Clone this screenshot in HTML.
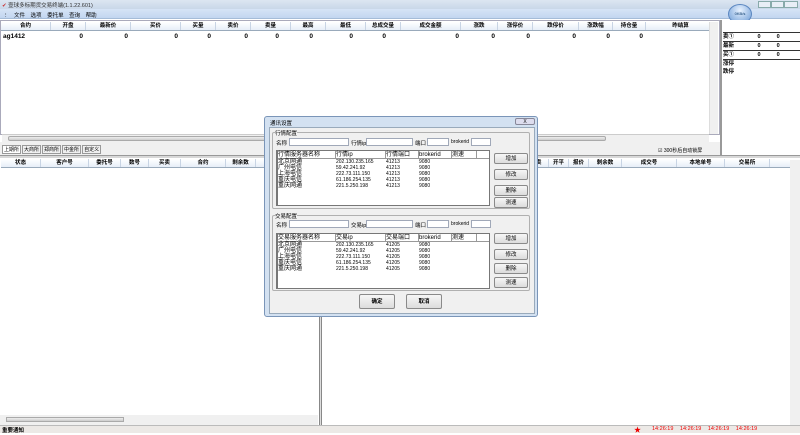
<!DOCTYPE html><html><head><meta charset="utf-8"><style>
*{margin:0;padding:0;box-sizing:border-box}
body{width:800px;height:433px;overflow:hidden;background:#fff;font-family:"Liberation Sans","Noto Sans CJK SC",sans-serif;font-size:6px;position:relative;color:#000}
.a{position:absolute}
.hd{position:absolute;height:9px;background:linear-gradient(#fff,#e6eef8);border-bottom:1px solid #9ab;display:flex;font-weight:bold;font-size:5.5px;line-height:8px}
.hd span{border-right:1px solid #c8d4e4;text-align:center;flex:none}
.row span{position:absolute;font-weight:bold;font-size:6.5px;text-align:right}
.dlg{position:absolute;left:264px;top:116px;width:274px;height:201px;background:#d3e1f1;border:1px solid #7a95b8;border-radius:3px}
.in{position:absolute;background:#f0f0f0}
.box{position:absolute;border:1px solid #b0b0b0;border-radius:2px}
.inp{position:absolute;background:#fff;border:1px solid #a0a8b8;height:8px}
.btn{position:absolute;width:34px;height:11px;border:1px solid #8a8a8a;border-radius:2px;background:linear-gradient(#f6f6f6,#dcdcdc);text-align:center;line-height:10px;font-size:5.5px}
.lst{position:absolute;background:#fff;border:1px solid #777;border-left:2px solid #777;font-size:6px;line-height:6px}
.lh{display:flex;border-bottom:1px solid #999;height:8px;line-height:8px;background:#fff}
.lh span{border-right:1px solid #999}
.lr{display:flex;height:6px;line-height:6px}
.lr span:nth-child(n+2){font-size:5px}
.t{position:absolute;font-size:5.5px}
.wb{position:absolute;top:1px;height:7px;border:1px solid #8aa;background:#e8eef6}
</style></head><body>
<div class="a" style="left:0;top:0;width:800px;height:9px;background:linear-gradient(#dce6f2,#c9d7e9)"></div>
<div class="a" style="left:2px;top:1px;font-size:5.5px;color:#333"><span style="color:#c33">✔</span> 壹球多标期货交易终端(1.1.22.601)</div>
<div class="wb" style="left:758px;width:13px"></div><div class="wb" style="left:771px;width:13px"></div><div class="wb" style="left:784px;width:14px"></div>
<div class="a" style="left:0;top:9px;width:800px;height:10px;background:linear-gradient(#d6e4f6,#c2d6f0);border-bottom:1px solid #a5bcd8"></div>
<div class="a" style="left:3px;top:11px;font-size:5.5px;word-spacing:4px">⋮ 文件 选项 委托单 查询 帮助</div>
<div class="a" style="left:728px;top:4px;width:24px;height:20px;border-radius:50%;background:radial-gradient(circle at 50% 30%,#e8f2ff,#6a9ad4);border:1px solid #5a86c0;font-size:4px;text-align:center;line-height:18px;color:#036">0KB/s</div>
<div class="a" style="left:0;top:20px;width:720px;height:115px;border:1px solid #aab"></div>
<div class="hd" style="left:1px;top:22px;width:716px">
<span style="width:50px">合约</span><span style="width:35px">开盘</span><span style="width:45px">最新价</span><span style="width:50px">买价</span><span style="width:35px">买量</span><span style="width:35px">卖价</span><span style="width:40px">卖量</span><span style="width:35px">最高</span><span style="width:40px">最低</span><span style="width:35px">总成交量</span><span style="width:60px">成交金额</span><span style="width:37px">涨跌</span><span style="width:35px">涨停价</span><span style="width:46px">跌停价</span><span style="width:34px">涨跌幅</span><span style="width:33px">持仓量</span><span style="width:70px">昨结算</span></div>
<div class="row">
<span style="left:3px;top:33px;text-align:left">ag1412</span>
<span style="left:70px;top:33px;width:13px">0</span><span style="left:115px;top:33px;width:13px">0</span><span style="left:165px;top:33px;width:13px">0</span><span style="left:198px;top:33px;width:13px">0</span><span style="left:235px;top:33px;width:13px">0</span><span style="left:266px;top:33px;width:13px">0</span><span style="left:300px;top:33px;width:13px">0</span><span style="left:340px;top:33px;width:13px">0</span><span style="left:373px;top:33px;width:13px">0</span><span style="left:446px;top:33px;width:13px">0</span><span style="left:482px;top:33px;width:13px">0</span><span style="left:517px;top:33px;width:13px">0</span><span style="left:563px;top:33px;width:13px">0</span><span style="left:597px;top:33px;width:13px">0</span><span style="left:630px;top:33px;width:13px">0</span></div>
<div class="a" style="left:709px;top:22px;width:9px;height:112px;background:#f0f0f0;border-left:1px solid #ddd"></div>
<div class="a" style="left:2px;top:134px;width:707px;height:8px;background:#f0f0f0;border-top:1px solid #ccc"></div>
<div class="a" style="left:8px;top:136px;width:598px;height:5px;background:linear-gradient(#eee,#ccc);border:1px solid #aaa;border-radius:2px"></div>
<div class="a" style="left:720px;top:20px;width:80px;height:135px;background:#fff;border-left:2px solid #999"></div>
<div class="a" style="left:723px;top:22px;width:77px;height:134px;font-size:5.5px;font-weight:bold;line-height:8px">
<div style="height:10px"></div>
<div style="border-top:1px solid #333">卖① <span style="margin-left:22px">0</span><span style="margin-left:16px">0</span></div>
<div style="border-top:1px solid #333">最新 <span style="margin-left:22px">0</span><span style="margin-left:16px">0</span></div>
<div style="border-top:1px solid #333">买① <span style="margin-left:22px">0</span><span style="margin-left:16px">0</span></div>
<div style="border-top:1px solid #333">涨停</div><div>跌停</div></div>
<div class="a" style="left:0;top:142px;width:720px;height:14px;background:#f0f0f0"></div>
<div class="a" style="left:2px;top:145px;font-size:5px;display:flex;gap:1px">
<span style="border:1px solid #999;padding:0 1px;background:#fff">上期所</span><span style="border:1px solid #999;padding:0 1px">大商所</span><span style="border:1px solid #999;padding:0 1px">郑商所</span><span style="border:1px solid #999;padding:0 1px">中金所</span><span style="border:1px solid #999;padding:0 1px">自定义</span></div>
<div class="t" style="left:658px;top:147px;font-size:5px">☑ 300秒后自动锁屏</div>
<div class="a" style="left:0;top:155px;width:800px;height:3px;background:#d8d8d8;border-top:1px solid #999"></div>
<div class="hd" style="left:1px;top:159px;width:318px"><span style="width:40px">状态</span><span style="width:48px">客户号</span><span style="width:32px">委托号</span><span style="width:28px">数号</span><span style="width:32px">买卖</span><span style="width:45px">合约</span><span style="width:30px">剩余数</span><span style="width:30px">报价</span></div>
<div class="hd" style="left:322px;top:159px;width:468px;justify-content:flex-end"><span style="width:25px">买卖</span><span style="width:20px">开平</span><span style="width:20px">报价</span><span style="width:33px">剩余数</span><span style="width:55px">成交号</span><span style="width:48px">本地单号</span><span style="width:45px">交易所</span><span style="width:20px;border:0"></span></div>
<div class="a" style="left:319px;top:158px;width:3px;height:268px;background:#ddd;border-left:1px solid #888;border-right:1px solid #888"></div>
<div class="a" style="left:0;top:415px;width:318px;height:10px;background:#f0f0f0"></div>
<div class="a" style="left:6px;top:417px;width:118px;height:5px;background:linear-gradient(#eee,#ccc);border:1px solid #aaa"></div>
<div class="a" style="left:790px;top:160px;width:10px;height:265px;background:#f0f0f0"></div>
<div class="a" style="left:0;top:425px;width:800px;height:8px;background:#ece9e6;border-top:1px solid #bbb"></div>
<div class="t" style="left:2px;top:426px;font-weight:bold">重要通知</div>
<div class="t" style="left:634px;top:425px;color:#e00;font-size:7px">★</div>
<div class="t" style="left:652px;top:426px;color:#e00;font-size:5.5px;word-spacing:5px">14:26:19 14:26:19 14:26:19 14:26:19</div>
<div class="dlg">
<div class="t" style="left:5px;top:2px">通讯设置</div>
<div class="a" style="left:250px;top:1px;width:20px;height:7px;border:1px solid #889;border-radius:2px;background:#dde;font-size:5px;text-align:center;line-height:6px">X</div>
<div class="in" style="left:4px;top:10px;width:266px;height:187px;border:1px solid #9ab"></div>
<div class="box" style="left:7px;top:15px;width:258px;height:77px"></div>
<div class="t" style="left:10px;top:12px;background:#f0f0f0">行情配置</div>
<div class="t" style="left:11px;top:22px">名称</div><div class="inp" style="left:24px;top:21px;width:60px"></div>
<div class="t" style="left:86px;top:22px">行情ip</div><div class="inp" style="left:101px;top:21px;width:47px"></div>
<div class="t" style="left:150px;top:22px">端口</div><div class="inp" style="left:162px;top:21px;width:22px"></div>
<div class="t" style="left:186px;top:22px;font-size:5px">brokerid</div><div class="inp" style="left:206px;top:21px;width:20px"></div>
<div class="lst" style="left:11px;top:33px;width:214px;height:56px">
<div class="lh"><span style="width:58px">行情服务器名称</span><span style="width:50px">行情ip</span><span style="width:33px">行情端口</span><span style="width:33px">brokerid</span><span style="width:25px">测速</span></div>
<div class="lr"><span style="width:58px">北京网通</span><span style="width:50px">202.130.235.165</span><span style="width:33px">41213</span><span>9080</span></div>
<div class="lr"><span style="width:58px">广州电信</span><span style="width:50px">59.42.241.92</span><span style="width:33px">41213</span><span>9080</span></div>
<div class="lr"><span style="width:58px">上海电信</span><span style="width:50px">222.73.111.150</span><span style="width:33px">41213</span><span>9080</span></div>
<div class="lr"><span style="width:58px">重庆电信</span><span style="width:50px">61.186.254.135</span><span style="width:33px">41213</span><span>9080</span></div>
<div class="lr"><span style="width:58px">重庆网通</span><span style="width:50px">221.5.250.198</span><span style="width:33px">41213</span><span>9080</span></div>
</div>
<div class="btn" style="left:229px;top:36px">增加</div><div class="btn" style="left:229px;top:52px">修改</div><div class="btn" style="left:229px;top:68px">删除</div><div class="btn" style="left:229px;top:80px">测速</div>
<div class="box" style="left:7px;top:98px;width:258px;height:76px"></div>
<div class="t" style="left:10px;top:95px;background:#f0f0f0">交易配置</div>
<div class="t" style="left:11px;top:104px">名称</div><div class="inp" style="left:24px;top:103px;width:60px"></div>
<div class="t" style="left:86px;top:104px">交易ip</div><div class="inp" style="left:101px;top:103px;width:47px"></div>
<div class="t" style="left:150px;top:104px">端口</div><div class="inp" style="left:162px;top:103px;width:22px"></div>
<div class="t" style="left:186px;top:104px;font-size:5px">brokerid</div><div class="inp" style="left:206px;top:103px;width:20px"></div>
<div class="lst" style="left:11px;top:116px;width:214px;height:56px">
<div class="lh"><span style="width:58px">交易服务器名称</span><span style="width:50px">交易ip</span><span style="width:33px">交易端口</span><span style="width:33px">brokerid</span><span style="width:25px">测速</span></div>
<div class="lr"><span style="width:58px">北京网通</span><span style="width:50px">202.130.235.165</span><span style="width:33px">41205</span><span>9080</span></div>
<div class="lr"><span style="width:58px">广州电信</span><span style="width:50px">59.42.241.92</span><span style="width:33px">41205</span><span>9080</span></div>
<div class="lr"><span style="width:58px">上海电信</span><span style="width:50px">222.73.111.150</span><span style="width:33px">41205</span><span>9080</span></div>
<div class="lr"><span style="width:58px">重庆电信</span><span style="width:50px">61.186.254.135</span><span style="width:33px">41205</span><span>9080</span></div>
<div class="lr"><span style="width:58px">重庆网通</span><span style="width:50px">221.5.250.198</span><span style="width:33px">41205</span><span>9080</span></div>
</div>
<div class="btn" style="left:229px;top:116px">增加</div><div class="btn" style="left:229px;top:132px">修改</div><div class="btn" style="left:229px;top:146px">删除</div><div class="btn" style="left:229px;top:160px">测速</div>
<div class="btn" style="left:94px;top:177px;width:36px;height:15px;line-height:14px;font-weight:bold">确定</div>
<div class="btn" style="left:141px;top:177px;width:36px;height:15px;line-height:14px;font-weight:bold">取消</div>
</div>
</body></html>
